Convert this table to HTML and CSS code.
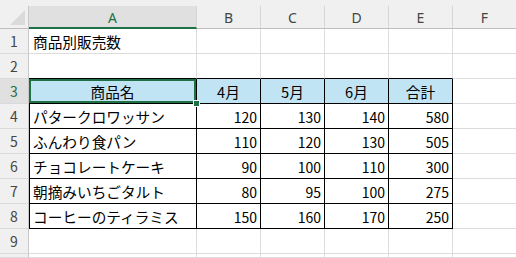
FILE: index.html
```html
<!DOCTYPE html>
<html lang="ja">
<head>
<meta charset="utf-8">
<link rel="stylesheet" href="styles.css">
</head>
<body>
<div class="strip"></div>
<div class="sheet">
  <div class="corner"><svg width="15" height="15" viewBox="0 0 15 15"><polygon points="0,15 15,15 15,0" fill="#dadada"/></svg></div>
  <div class="ch sel">A</div>
  <div class="ch">B</div>
  <div class="ch">C</div>
  <div class="ch">D</div>
  <div class="ch">E</div>
  <div class="ch">F</div>

  <div class="rh">1</div>
  <div class="c">商品別販売数</div><div class="c"></div><div class="c"></div><div class="c"></div><div class="c"></div><div class="c"></div>

  <div class="rh">2</div>
  <div class="c tb"></div><div class="c tb"></div><div class="c tb"></div><div class="c tb"></div><div class="c tb"></div><div class="c"></div>

  <div class="rh rsel">3</div>
  <div class="c t tl hd h active">商品名</div><div class="c t hd h">4月</div><div class="c t hd h">5月</div><div class="c t hd h">6月</div><div class="c t hd h">合計</div><div class="c"></div>

  <div class="rh">4</div>
  <div class="c t tl">パタークロワッサン</div><div class="c t n">120</div><div class="c t n">130</div><div class="c t n">140</div><div class="c t n">580</div><div class="c"></div>

  <div class="rh">5</div>
  <div class="c t tl">ふんわり食パン</div><div class="c t n">110</div><div class="c t n">120</div><div class="c t n">130</div><div class="c t n">505</div><div class="c"></div>

  <div class="rh">6</div>
  <div class="c t tl">チョコレートケーキ</div><div class="c t n">90</div><div class="c t n">100</div><div class="c t n">110</div><div class="c t n">300</div><div class="c"></div>

  <div class="rh">7</div>
  <div class="c t tl">朝摘みいちごタルト</div><div class="c t n">80</div><div class="c t n">95</div><div class="c t n">100</div><div class="c t n">275</div><div class="c"></div>

  <div class="rh">8</div>
  <div class="c t tl">コーヒーのティラミス</div><div class="c t n">150</div><div class="c t n">160</div><div class="c t n">170</div><div class="c t n">250</div><div class="c"></div>

  <div class="rh">9</div>
  <div class="c"></div><div class="c"></div><div class="c"></div><div class="c"></div><div class="c"></div><div class="c"></div>

  <div class="rh"></div>
  <div class="c"></div><div class="c"></div><div class="c"></div><div class="c"></div><div class="c"></div><div class="c"></div>
</div>
</body>
</html>
```

FILE: styles.css
```css
html, body {
  margin: 0;
  padding: 0;
  background: #ffffff;
  overflow: hidden;
  width: 516px;
  height: 258px;
}

.strip {
  height: 6px;
  background: #f0f0f0;
}

.sheet {
  display: grid;
  grid-template-columns: 29px 168px 64px 64px 64px 64px 64px;
  grid-template-rows: 23px repeat(9, 25px) 4px;
  font-family: "Noto Sans CJK JP", "Noto Sans", sans-serif;
  color: #000;
}

.sheet > div {
  box-sizing: border-box;
  display: flex;
  align-items: center;
  white-space: nowrap;
  overflow: hidden;
}

.corner {
  background: #f0f0f0;
  border-right: 1px solid #c8c8c8;
  border-bottom: 1px solid #bdbdbd;
  justify-content: flex-end;
  align-items: flex-end !important;
  padding: 0 3px 3px 0;
}

.ch {
  background: #f0f0f0;
  border-right: 1px solid #d6d6d6;
  border-bottom: 1px solid #bdbdbd;
  justify-content: center;
  font-family: "Noto Sans", sans-serif;
  font-size: 14px;
  color: #454545;
  padding-top: 1px;
}

.ch.sel {
  background: #e0e0e0;
  border-bottom: 2px solid #1e7145;
  color: #1e7145;
}

.rh {
  background: #f0f0f0;
  border-right: 1px solid #c8c8c8;
  border-bottom: 1px solid #dadada;
  justify-content: center;
  font-size: 14px;
  color: #454545;
}

.rh.rsel {
  background: #e0e0e0;
  color: #1e7145;
}

.c {
  border-right: 1px solid #dcdcdc;
  border-bottom: 1px solid #dcdcdc;
  padding: 1px 4px 0 4px;
  font-size: 14.67px;
}

.tb {
  border-bottom-color: #000 !important;
}

.t {
  border-right-color: #000;
  border-bottom-color: #000;
}

.tl {
  box-shadow: inset 1px 0 0 #000;
}

.hd {
  background: #c1e4f5;
}

.h {
  justify-content: center;
}

.n {
  justify-content: flex-end;
  font-size: 14px;
  padding-right: 3px;
}

.active {
  position: relative;
  overflow: visible !important;
}

.active::after {
  content: "";
  position: absolute;
  top: 0;
  left: 0;
  right: 0;
  bottom: 0;
  border: 2px solid #1e7145;
}

.active::before {
  content: "";
  position: absolute;
  right: -4px;
  bottom: -4px;
  width: 5px;
  height: 5px;
  background: #1e7145;
  border: 1px solid #ffffff;
  z-index: 2;
}
```
